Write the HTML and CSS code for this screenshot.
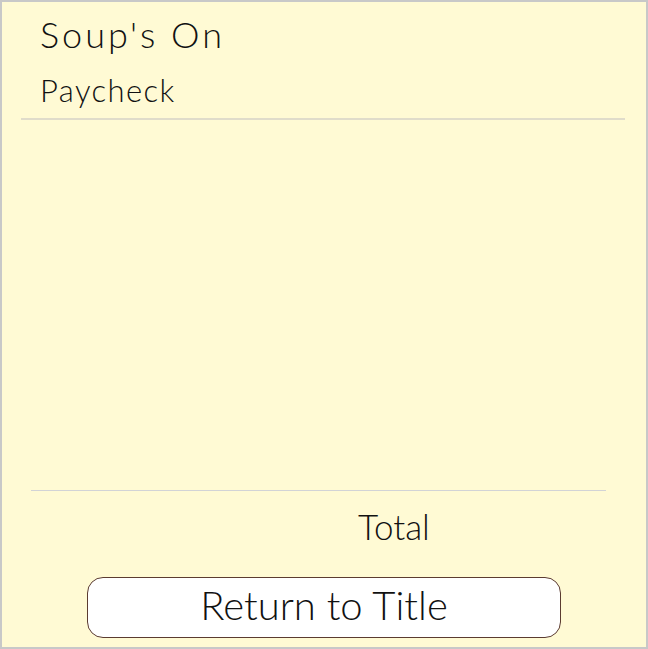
FILE: index.html
```html
<!DOCTYPE html>
<html>
<head>
<meta charset="utf-8">
<link rel="stylesheet" href="styles.css">
</head>
<body>
<div class="frame">
  <header class="header">
    <h1 class="title">Soup's On</h1>
    <h2 class="subtitle">Paycheck</h2>
  </header>
  <div class="rule-top"></div>
  <main class="list"></main>
  <div class="rule-bottom"></div>
  <div class="total-row"><span class="total">Total</span></div>
  <div class="actions">
    <button class="btn">Return to Title</button>
  </div>
</div>
</body>
</html>
```
FILE: styles.css
```css
html, body {
  margin: 0;
  padding: 0;
}
body {
  width: 648px;
  height: 649px;
  font-family: Lato, "Open Sans", sans-serif;
  font-weight: 300;
  color: #111;
}
.frame {
  box-sizing: border-box;
  width: 648px;
  height: 649px;
  border: 2px solid #c8c8c8;
  background: #fffad4;
  display: flex;
  flex-direction: column;
}
.header {
  padding: 12px 0 0 38px;
}
.title {
  margin: 0;
  font-size: 36px;
  line-height: 40px;
  font-weight: 300;
  letter-spacing: 3px;
}
.subtitle {
  margin: 18px 0 0;
  font-size: 31px;
  line-height: 36px;
  font-weight: 300;
  letter-spacing: 1.4px;
}
.rule-top {
  margin: 10px 21px 0 19px;
  height: 2px;
  background: #e0dcca;
}
.list {
  flex: 1;
}
.rule-bottom {
  margin: 0 40px 0 29px;
  height: 1px;
  background: #d2d3d6;
}
.total-row {
  padding-left: 356px;
  height: 62px;
}
.total {
  display: block;
  font-size: 35px;
  line-height: 40px;
  margin-top: 15px;
}
.actions {
  display: flex;
  justify-content: center;
  padding-bottom: 9px;
  margin-top: 24px;
}
.btn {
  box-sizing: border-box;
  width: 474px;
  height: 61px;
  background: #fff;
  border: 1.5px solid #5b3b30;
  border-radius: 16px;
  font-family: Lato, "Open Sans", sans-serif;
  font-weight: 300;
  font-size: 40px;
  color: #111;
  padding: 0 0 4px;
  line-height: 53px;
}
```
